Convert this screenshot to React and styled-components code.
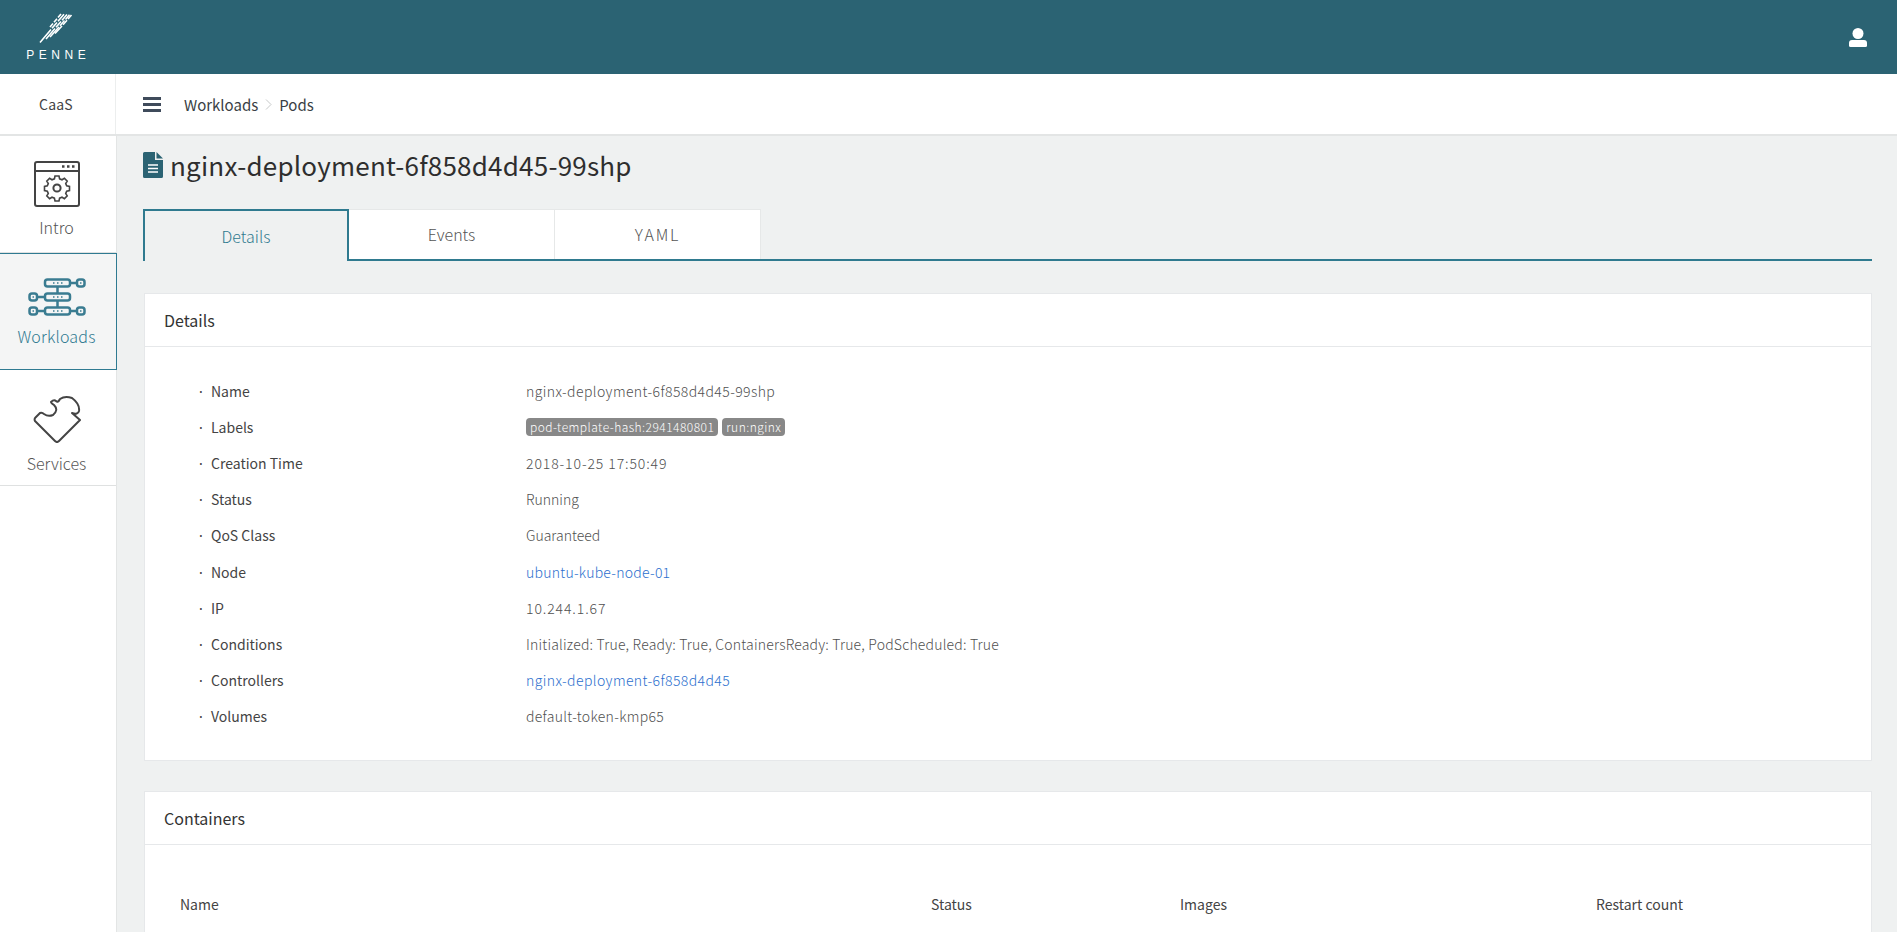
import styled, { createGlobalStyle } from "styled-components";

const GlobalStyle = createGlobalStyle`
  html, body {
    margin: 0;
    height: 100%;
    overflow: hidden;
    background: #eff1f1;
    font-family: "Noto Sans CJK KR", "Noto Sans", sans-serif;
    font-weight: 300;
    color: #333;
  }
  * { box-sizing: border-box; }
`;

const Page = styled.div`
  height: 100vh;
  display: flex;
  flex-direction: column;
  overflow: hidden;
`;

const Header = styled.header`
  height: 74px;
  flex: none;
  background: #2b6373;
  display: flex;
  align-items: center;
  justify-content: space-between;
  padding: 0 30px 0 25px;
`;

const Logo = styled.div`
  width: 62px;
  padding-bottom: 3px;
  display: flex;
  flex-direction: column;
  align-items: center;
  color: #fff;
`;

const LogoText = styled.span`
  font-family: "Liberation Sans", sans-serif;
  font-size: 12px;
  line-height: 10px;
  letter-spacing: 4.5px;
  margin-right: -4.5px;
  margin-top: 6px;
`;

const SubBar = styled.div`
  height: 62px;
  flex: none;
  background: #fff;
  border-bottom: 2px solid #e3e5e5;
  display: flex;
  align-items: center;
`;

const Product = styled.div`
  width: 116px;
  height: 100%;
  padding-right: 3px;
  border-right: 1px solid #eceeee;
  display: flex;
  align-items: center;
  justify-content: center;
  font-size: 14px;
  letter-spacing: 0.2px;
  color: #444;
  font-weight: 400;
`;

const Burger = styled.div`
  width: 18px;
  margin-left: 27px;
  margin-right: 23px;
  display: flex;
  flex-direction: column;
  gap: 3px;
  span {
    height: 3px;
    background: #3f4b5b;
  }
`;

const Crumbs = styled.div`
  display: flex;
  align-items: center;
  gap: 7px;
  font-size: 15px;
  font-weight: 400;
  color: #3a3f45;
`;

const Body = styled.div`
  flex: 1;
  display: flex;
  min-height: 0;
`;

const Sidebar = styled.nav`
  width: 117px;
  flex: none;
  background: #fff;
  border-right: 1px solid #e3e5e5;
`;

const SideItem = styled.div`
  height: ${(p) => p.$h}px;
  display: flex;
  flex-direction: column;
  align-items: center;
  justify-content: flex-end;
  padding-bottom: ${(p) => p.$pb}px;
  padding-right: 3px;
  font-size: 16px;
  letter-spacing: ${(p) => (p.$active ? 0.2 : 0)}px;
  color: ${(p) => (p.$active ? "#2f7a91" : "#555")};
  background: ${(p) => (p.$active ? "#f4f5f5" : "#fff")};
  border-bottom: 1px solid ${(p) => (p.$active ? "#2f7a91" : "#dfe1e1")};
  border-top: ${(p) => (p.$active ? "1px solid #2f7a91" : "none")};
  border-right: ${(p) => (p.$active ? "1px solid #2f7a91" : "none")};
  margin-right: ${(p) => (p.$active ? "-1px" : "0")};
  svg { margin-bottom: ${(p) => p.$gap}px; }
`;

const Main = styled.main`
  flex: 1;
  min-width: 0;
  padding: 0 25px 0 26px;
`;

const Title = styled.h1`
  margin: 0 0 16px;
  height: 57px;
  display: flex;
  align-items: center;
  gap: 7px;
  font-size: 26px;
  letter-spacing: 0.22px;
  font-weight: 400;
  color: #2e2e2e;
`;

const Tabs = styled.div`
  display: flex;
  height: 52px;
  border-bottom: 2px solid #2f7a8f;
`;

const Tab = styled.div`
  width: 206px;
  height: ${(p) => (p.$active ? 52 : 50)}px;
  display: flex;
  align-items: center;
  justify-content: center;
  font-size: 16px;
  letter-spacing: ${(p) => p.$ls || 0}px;
  padding-bottom: ${(p) => (p.$active ? 0 : 2)}px;
  color: ${(p) => (p.$active ? "#2f7a8f" : "#555")};
  background: ${(p) => (p.$active ? "#eff1f1" : "#fff")};
  border: ${(p) => (p.$active ? "2px solid #2f7a8f" : "1px solid #e6e8e8")};
  border-bottom: ${(p) => (p.$active ? "none" : "0")};
  border-left-width: ${(p) => (p.$active ? "2px" : "0")};
`;

const Card = styled.section`
  background: #fff;
  border: 1px solid #e6e8ea;
  margin-top: ${(p) => p.$mt}px;
  margin-left: 1px;
`;

const CardHead = styled.div`
  height: 53px;
  padding-left: 19px;
  display: flex;
  align-items: center;
  font-size: 16px;
  font-weight: 400;
  color: #333;
  border-bottom: 1px solid #e6e8ea;
`;

const DetailList = styled.div`
  padding: 26px 0 26px 52px;
`;

const Row = styled.div`
  height: 36.1px;
  display: flex;
  align-items: center;
  font-size: 14px;
`;

const Label = styled.div`
  width: 329px;
  flex: none;
  color: #444;
  font-weight: 400;
  &::before {
    content: "·";
    display: inline-block;
    width: 14px;
  }
`;

const Value = styled.div`
  color: #505050;
  display: flex;
  gap: 4px;
  letter-spacing: ${(p) => p.$ls || 0}px;
`;

const LinkText = styled.span`
  color: #2c6fce;
`;

const Badge = styled.span`
  background: #888;
  color: #fff;
  border-radius: 4px;
  font-size: 12px;
  line-height: 18px;
  letter-spacing: 0.46px;
  padding: 0 4px;
`;

const TableHead = styled.div`
  display: flex;
  padding: 49px 0 120px 35px;
  font-size: 14px;
  font-weight: 400;
  color: #444;
`;

const Col = styled.div`
  width: ${(p) => p.$w}px;
  flex: none;
`;

function LogoMark() {
  return (
    <svg width="34" height="32" viewBox="0 0 34 32" fill="none" stroke="#fff" strokeWidth="1.600">
      <path d="M11 15 L14 11.500 M15 10.300 L18 6.800 M19 5.600 L22 2" />
      <path d="M1 30.500 L12 17.500 M13 16.300 L18 10.500 M19 9.300 L25 2.300" />
      <path d="M7 27 L16 16.500 M17 15.300 L22 9.500 M23 8.300 L28 2.500" />
      <path d="M11 25 L20 15 M21 13.800 L25.500 8.600 M26.500 7.400 L30.500 2.800" />
      <path d="M16 21.500 L23 14 M24 12.800 L28 8.200 M29 7 L32.500 3" />
    </svg>
  );
}

function UserIcon() {
  return (
    <svg width="18" height="19" viewBox="0 0 18 19" fill="#fff">
      <circle cx="9" cy="5.500" r="5.500" />
      <path d="M1.500 19 Q0 19 0 17.500 L0 15 Q0 12 3 12 L15 12 Q18 12 18 15 L18 17.500 Q18 19 16.500 19 Z" />
    </svg>
  );
}

function CrumbChevron() {
  return (
    <svg width="7" height="11" viewBox="0 0 7 11" fill="none" stroke="#c6c8c8" strokeWidth="1">
      <path d="M1 0.500 L6 5.500 L1 10.500" />
    </svg>
  );
}

function IntroIcon() {
  return (
    <svg width="46" height="46" viewBox="0 0 46 46" fill="none" stroke="#444" strokeWidth="2">
      <rect x="1" y="1" width="44" height="44" rx="2" />
      <path d="M1 10 H45" />
      <path d="M28 5.500 h2.500 M33 5.500 h2.500 M38 5.500 h2.500" strokeWidth="2.500" />
      <circle cx="23" cy="27" r="3.600" />
      <path d="M21 16 h4 l.6 2.800 2.400 1 2.400-1.500 2.800 2.800-1.500 2.400 1 2.400 2.800.6 v4 l-2.800.6-1 2.400 1.500 2.400-2.800 2.800-2.400-1.500-2.400 1-.6 2.800 h-4 l-.6-2.800-2.400-1-2.400 1.500-2.800-2.800 1.500-2.400-1-2.400-2.800-.6 v-4 l2.800-.6 1-2.400-1.500-2.400 2.800-2.800 2.400 1.500 2.400-1 z" strokeWidth="1.600" transform="translate(0 -1)" />
    </svg>
  );
}

function WorkloadsIcon() {
  return (
    <svg width="58" height="38" viewBox="0 0 58 38" fill="none" stroke="#3a7c91" strokeWidth="2.500">
      <rect x="17" y="1.500" width="25" height="7" rx="2.500" />
      <rect x="17" y="15.500" width="25" height="7" rx="2.500" />
      <rect x="17" y="29.500" width="25" height="7" rx="2.500" />
      <rect x="49" y="1.500" width="7.500" height="7" rx="2.500" />
      <rect x="1.500" y="15.500" width="7.500" height="7" rx="2.500" />
      <rect x="1.500" y="29.500" width="7.500" height="7" rx="2.500" />
      <rect x="49" y="29.500" width="7.500" height="7" rx="2.500" />
      <path d="M42 5 H49 M9 19 H17 M9 33 H17 M42 33 H49 M29.500 9 V15 M29.500 23 V29" />
      <path d="M25 5 h1.500 M29 5 h1.500 M33 5 h1.500 M25 19 h1.500 M29 19 h1.500 M33 19 h1.500 M25 33 h1.500 M29 33 h1.500 M33 33 h1.500 M52 5 h1.500 M4.500 19 h1.500 M4.500 33 h1.500 M52 33 h1.500" strokeWidth="1.500" />
    </svg>
  );
}

function ServicesIcon() {
  return (
    <svg width="48" height="48" viewBox="0 0 48 48" fill="none" stroke="#444" strokeWidth="2" strokeLinejoin="round">
      <path d="M2 26 Q1 24 2.500 22.500 L7 18 Q9 17 11 19 Q15 22 20 20 Q26 15 21 10 Q18 8 18 7 Q21 4 23 6 Q25 8 27 4 Q32 0.500 39 3 Q47 9 46 16 Q45 20 39 18 L47 25 L26 46 Q24 48 22 46 Z" />
    </svg>
  );
}

function FileIcon() {
  return (
    <svg width="20" height="26" viewBox="0 0 20 26">
      <path d="M0 1.500 Q0 0 1.500 0 H12 V8 H20 V24.500 Q20 26 18.500 26 H1.500 Q0 26 0 24.500 Z" fill="#2b6373" />
      <path d="M13.500 0 L20 6.500 H13.500 Z" fill="#2b6373" />
      <path d="M5 13 H15 M5 16.500 H15 M5 20 H15" stroke="#fff" strokeWidth="1.500" />
    </svg>
  );
}

const details = [
  { label: "Name", value: "nginx-deployment-6f858d4d45-99shp", ls: 0.4 },
  { label: "Labels", badges: ["pod-template-hash:2941480801", "run:nginx"] },
  { label: "Creation Time", value: "2018-10-25 17:50:49", ls: 0.9 },
  { label: "Status", value: "Running" },
  { label: "QoS Class", value: "Guaranteed" },
  { label: "Node", value: "ubuntu-kube-node-01", ls: 0.25, link: true },
  { label: "IP", value: "10.244.1.67", ls: 0.9 },
  { label: "Conditions", value: "Initialized: True, Ready: True, ContainersReady: True, PodScheduled: True", ls: 0.2 },
  { label: "Controllers", value: "nginx-deployment-6f858d4d45", ls: 0.4, link: true },
  { label: "Volumes", value: "default-token-kmp65", ls: 0.3 },
];

export default function App() {
  return (
    <Page>
      <GlobalStyle />
      <Header>
        <Logo>
          <LogoMark />
          <LogoText>PENNE</LogoText>
        </Logo>
        <UserIcon />
      </Header>
      <SubBar>
        <Product>CaaS</Product>
        <Burger>
          <span />
          <span />
          <span />
        </Burger>
        <Crumbs>
          Workloads
          <CrumbChevron />
          Pods
        </Crumbs>
      </SubBar>
      <Body>
        <Sidebar>
          <SideItem $h={117} $pb={13} $gap={8}>
            <IntroIcon />
            Intro
          </SideItem>
          <SideItem $h={117} $pb={21} $gap={8} $active>
            <WorkloadsIcon />
            Workloads
          </SideItem>
          <SideItem $h={116} $pb={10} $gap={8}>
            <ServicesIcon />
            Services
          </SideItem>
        </Sidebar>
        <Main>
          <Title>
            <FileIcon />
            nginx-deployment-6f858d4d45-99shp
          </Title>
          <Tabs>
            <Tab $active>Details</Tab>
            <Tab>Events</Tab>
            <Tab $ls={1.8}>YAML</Tab>
          </Tabs>
          <Card $mt={32}>
            <CardHead>Details</CardHead>
            <DetailList>
              {details.map((d) => (
                <Row key={d.label}>
                  <Label>{d.label}</Label>
                  <Value $ls={d.ls}>
                    {d.badges && d.badges.map((b) => <Badge key={b}>{b}</Badge>)}
                    {d.link ? <LinkText>{d.value}</LinkText> : d.value}
                  </Value>
                </Row>
              ))}
            </DetailList>
          </Card>
          <Card $mt={30}>
            <CardHead>Containers</CardHead>
            <TableHead>
              <Col $w={751}>Name</Col>
              <Col $w={249}>Status</Col>
              <Col $w={416}>Images</Col>
              <Col $w={120}>Restart count</Col>
            </TableHead>
          </Card>
        </Main>
      </Body>
    </Page>
  );
}
